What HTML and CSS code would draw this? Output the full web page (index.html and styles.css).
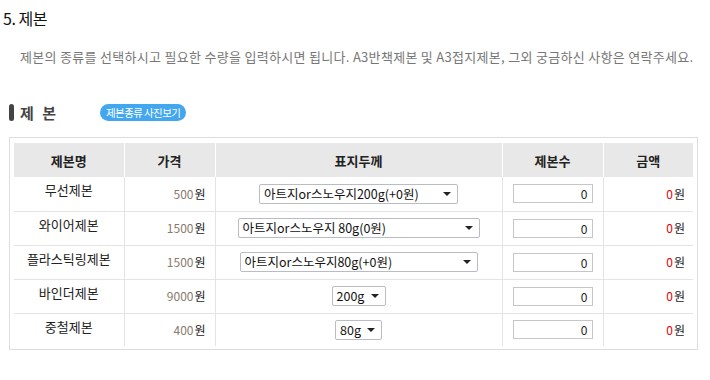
FILE: index.html
```html
<!DOCTYPE html>
<html>
<head>
    <title>제본</title>
    <link rel="stylesheet" href="styles.css">
</head>
<body>
    <div class="page">
        <h2 class="title">5. 제본</h2>
        <p class="desc">제본의 종류를 선택하시고 필요한 수량을 입력하시면 됩니다. A3반책제본 및 A3접지제본, 그외 궁금하신 사항은 연락주세요.</p>

        <div class="sub-head">
            <span class="bar"></span>
            <span class="sub-title">제 본</span>
            <span class="badge">제본종류 사진보기</span>
        </div>

        <div class="box">
            <table class="bind-table">
                <colgroup>
                    <col style="width:110px">
                    <col style="width:91px">
                    <col style="width:287px">
                    <col style="width:101px">
                    <col style="width:90px">
                </colgroup>
                <thead>
                    <tr>
                        <th>제본명</th>
                        <th>가격</th>
                        <th>표지두께</th>
                        <th>제본수</th>
                        <th>금액</th>
                    </tr>
                </thead>
                <tbody>
                    <tr>
                        <td class="name">무선제본</td>
                        <td class="price"><span class="num">500</span>원</td>
                        <td class="opt"><span class="sel" style="width:199px">아트지or스노우지200g(+0원)</span></td>
                        <td class="qty"><span class="inp">0</span></td>
                        <td class="amt"><span class="red">0</span>원</td>
                    </tr>
                    <tr>
                        <td class="name">와이어제본</td>
                        <td class="price"><span class="num">1500</span>원</td>
                        <td class="opt"><span class="sel" style="width:242px">아트지or스노우지 80g(0원)</span></td>
                        <td class="qty"><span class="inp">0</span></td>
                        <td class="amt"><span class="red">0</span>원</td>
                    </tr>
                    <tr>
                        <td class="name">플라스틱링제본</td>
                        <td class="price"><span class="num">1500</span>원</td>
                        <td class="opt"><span class="sel" style="width:238px">아트지or스노우지80g(+0원)</span></td>
                        <td class="qty"><span class="inp">0</span></td>
                        <td class="amt"><span class="red">0</span>원</td>
                    </tr>
                    <tr>
                        <td class="name">바인더제본</td>
                        <td class="price"><span class="num">9000</span>원</td>
                        <td class="opt"><span class="sel" style="width:54px">200g</span></td>
                        <td class="qty"><span class="inp">0</span></td>
                        <td class="amt"><span class="red">0</span>원</td>
                    </tr>
                    <tr class="last">
                        <td class="name">중철제본</td>
                        <td class="price"><span class="num">400</span>원</td>
                        <td class="opt"><span class="sel" style="width:47px">80g</span></td>
                        <td class="qty"><span class="inp">0</span></td>
                        <td class="amt"><span class="red">0</span>원</td>
                    </tr>
                </tbody>
            </table>
        </div>
    </div>
</body>
</html>
```

FILE: styles.css
```css
body {
    margin: 0;
    background-color: #fff;
    color: #222;
    font-family: "Noto Sans CJK KR", "Noto Sans", sans-serif;
}

.page {
    padding: 8px 0 0 3px;
    width: 707px;
}

.title {
    margin: 0;
    font-size: 16px;
    font-weight: normal;
    color: #111;
    line-height: 20px;
    letter-spacing: -0.5px;
}

.desc {
    margin: 20px 0 0 17px;
    font-size: 13px;
    line-height: 18px;
    color: #777;
    letter-spacing: 0.3px;
    white-space: nowrap;
}

.sub-head {
    display: flex;
    align-items: center;
    margin: 36px 0 0 6px;
    height: 20px;
}

.bar {
    width: 5px;
    height: 17px;
    background-color: #444;
    border-radius: 3px;
}

.sub-title {
    margin-left: 6px;
    font-size: 15px;
    font-weight: bold;
    color: #444;
    word-spacing: 5px;
}

.badge {
    margin-left: 44px;
    background-color: #42a7ef;
    color: #fff;
    font-size: 10.5px;
    line-height: 17px;
    padding: 0 6px;
    border-radius: 9px;
    letter-spacing: -0.6px;
}

.box {
    margin: 15px 0 0 6px;
    width: 679px;
    border: 1px solid #ddd;
    padding: 5px 4px 3px 4px;
}

.bind-table {
    border-collapse: collapse;
    table-layout: fixed;
    width: 679px;
    font-size: 12px;
}

.bind-table th {
    background-color: #e8e8e8;
    height: 33px;
    padding: 0;
    font-size: 13px;
    font-weight: bold;
    color: #222;
    border-left: 1px solid #fff;
}

.bind-table th:first-child {
    border-left: none;
}

.bind-table tr {
    height: 34px;
}

.bind-table tr.last {
    height: 33px;
}

.bind-table td {
    padding: 0;
    line-height: 16px;
    border-left: 1px solid #e4e4e4;
    border-bottom: 1px solid #e4e4e4;
}

.bind-table td:first-child {
    border-left: none;
}

.bind-table tr.last td {
    border-bottom: none;
}

.name {
    text-align: center;
    vertical-align: top;
    font-size: 13px;
    padding-top: 5px !important;
}

.price {
    text-align: right;
    padding-right: 9px !important;
}

.num {
    color: #8a7a6e;
    margin-right: 1px;
}

.opt {
    text-align: center;
}

.sel {
    display: inline-block;
    position: relative;
    box-sizing: border-box;
    height: 20px;
    line-height: 18px;
    border: 1px solid #b9bcc4;
    border-radius: 2px;
    text-align: left;
    padding-left: 4px;
    font-size: 12.5px;
    color: #111;
    vertical-align: middle;
}

.sel::after {
    content: "";
    position: absolute;
    right: 6px;
    top: 7px;
    border-left: 4px solid transparent;
    border-right: 4px solid transparent;
    border-top: 4px solid #222;
}

.qty {
    text-align: center;
}

.inp {
    display: inline-block;
    box-sizing: border-box;
    width: 80px;
    height: 19px;
    line-height: 17px;
    border: 1px solid #c6c6c6;
    text-align: right;
    padding-right: 4px;
    vertical-align: middle;
}

.amt {
    text-align: right;
    padding-right: 8px !important;
}

.red {
    color: #e60000;
    margin-right: 1px;
}
```
